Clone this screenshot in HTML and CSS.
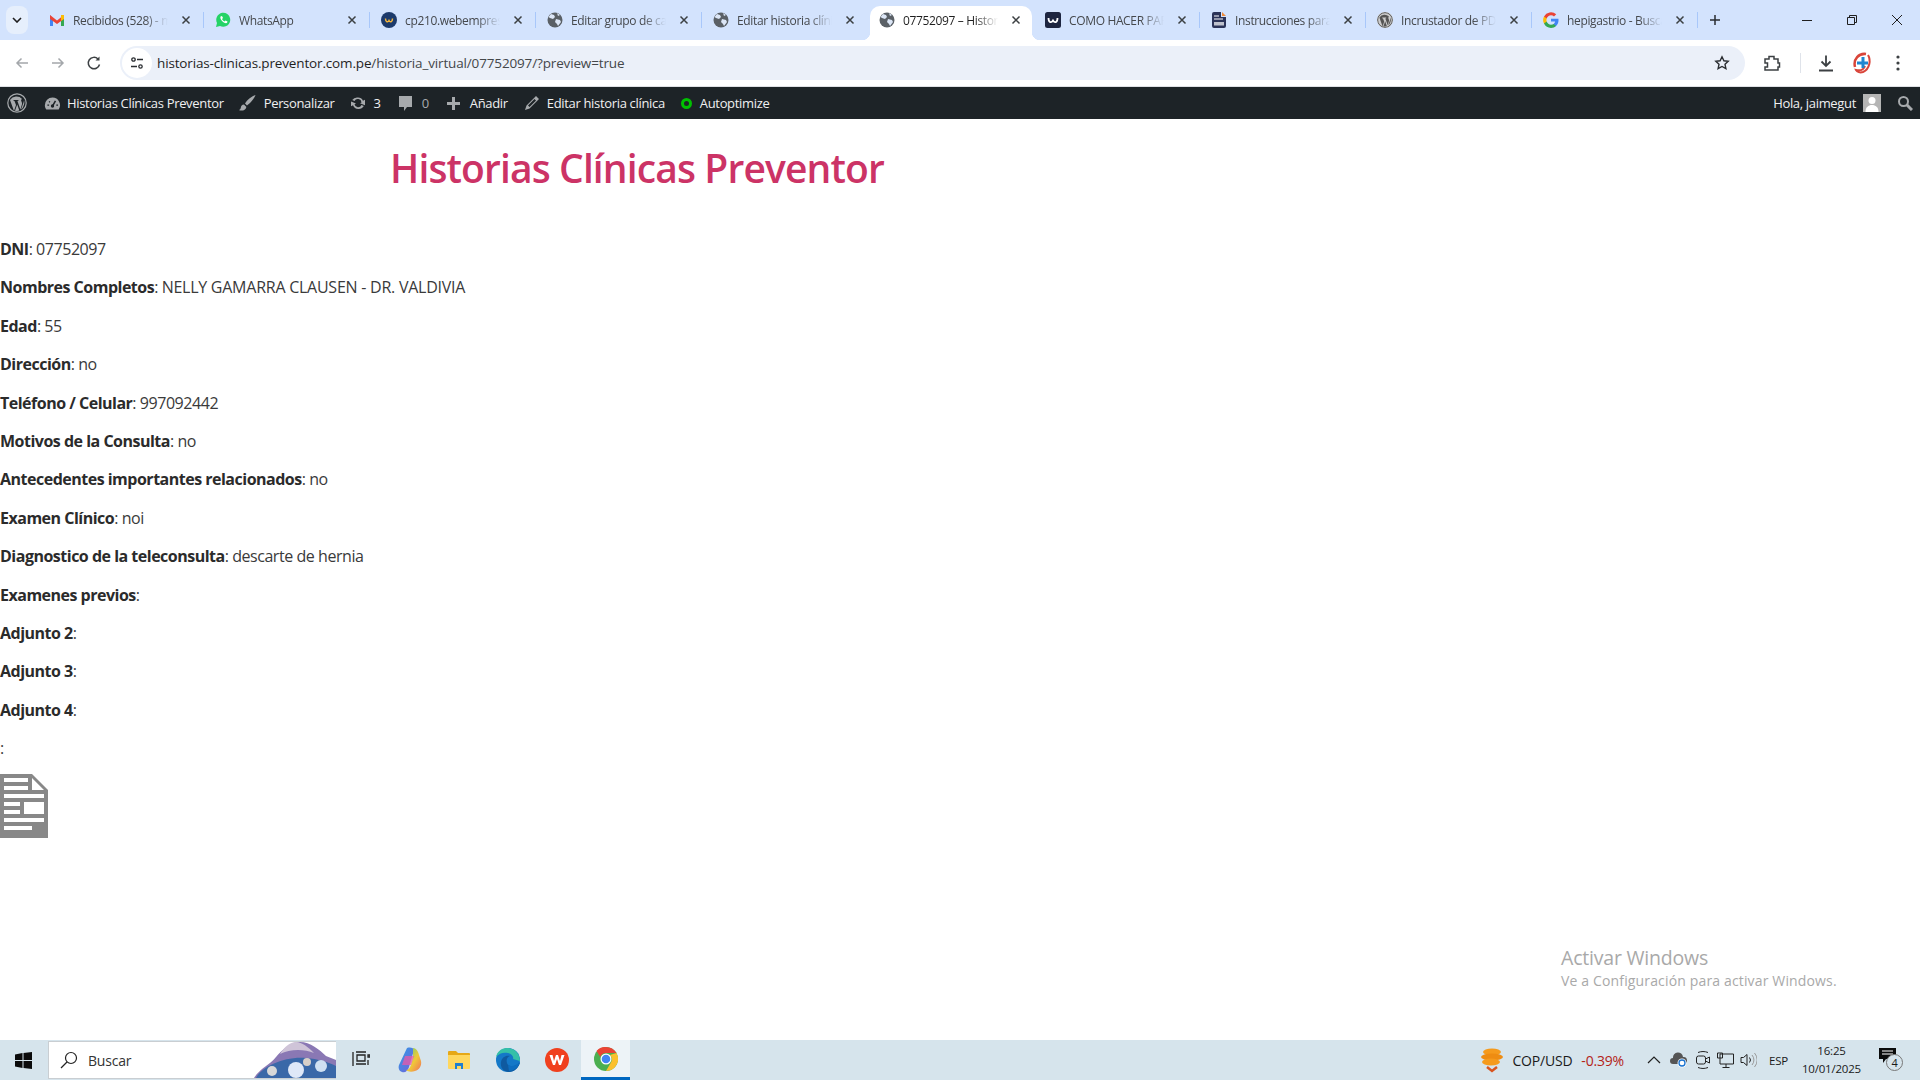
FILE: index.html
```html
<!DOCTYPE html>
<html lang="es">
<head>
<meta charset="utf-8">
<title>07752097 – Historias Clínicas Preventor</title>
<link rel="stylesheet" href="styles.css">
</head>
<body>
<svg class="defs" width="0" height="0" aria-hidden="true">
  <symbol id="globe" viewBox="0 0 16 16"><circle cx="8" cy="8" r="7.500" fill="#5a6066"/><path d="M4 2l3 1 1 2-2 2-3-1-1.500-1zM9 7l4 1 1 2-3 4-1-2-2-2zM10 1l3 2-2 1z" fill="#dce6f6"/></symbol>
  <symbol id="close" viewBox="0 0 10 10"><path d="M1.500 1.500l7 7M8.500 1.500l-7 7" fill="none" stroke="currentColor" stroke-width="1.500"/></symbol>
  <symbol id="wp" viewBox="0 0 20 20"><circle cx="10" cy="10" r="9.200" fill="none" stroke="currentColor" stroke-width="1.200"/><path d="M3 7l4 11 2-6-1.500-4-1-.2V7h5v.8l-1.100.2 3 8.500 1.500-5c.5-2-.8-3-.8-4.200 0-.8.500-1.200 1-1.400A7.800 7.800 0 0 0 3 7zM17 7c.8 2.500.3 5-1.500 8.200L14 16.500l2-5.500c.6-1.700 1-3 1-4zM10.200 11.500l-2.200 6.200c1.400.4 2.800.4 4.300-.1z" fill="currentColor"/></symbol>
  <linearGradient id="cop-a" x1="0" y1="0" x2="1" y2="1"><stop offset="0" stop-color="#2aa0e8"/><stop offset="1" stop-color="#7a5cd8"/></linearGradient>
  <linearGradient id="cop-b" x1="0" y1="0" x2="1" y2="1"><stop offset="0" stop-color="#5fd07a"/><stop offset=".55" stop-color="#f0c838"/><stop offset="1" stop-color="#f0705a"/></linearGradient>
</svg>

<header class="tabstrip">
  <div class="tab-menu"><svg width="10" height="6" viewBox="0 0 10 6"><path d="M1 1l4 4 4-4" fill="none" stroke="#1f1f1f" stroke-width="1.600"/></svg></div>
  <div class="tab">
    <svg class="fav" viewBox="0 0 16 16"><path d="M1 3v11h3V7z" fill="#4285f4"/><path d="M15 3v11h-3V7z" fill="#34a853"/><path d="M1 3l7 5.500L15 3v4L8 12 1 7z" fill="#ea4335"/><path d="M12 3h3v4l-3 2z" fill="#fbbc04"/></svg>
    <span class="tab-label">Recibidos (528) - mail</span>
    <svg class="tab-x"><use href="#close"/></svg>
  </div>
  <div class="tab">
    <svg class="fav" viewBox="0 0 16 16"><path d="M1 15l1-4a7 7 0 1 1 3 3z" fill="#25d366"/><path d="M5.500 4.500l1.500-.5 1 2-1 1c.5 1 1.500 2 2.500 2.500l1-1 2 1-.5 1.500c-3 1-7.500-3.500-6.500-6.500z" fill="#fff"/></svg>
    <span class="tab-label">WhatsApp</span>
    <svg class="tab-x"><use href="#close"/></svg>
  </div>
  <div class="tab">
    <svg class="fav" viewBox="0 0 16 16"><circle cx="8" cy="8" r="8" fill="#1c3a6b"/><path d="M4.500 6.500c0 4 2.500 4 3.500 2 1 2 3.500 2 3.500-2" fill="none" stroke="#f6b73c" stroke-width="1.500"/></svg>
    <span class="tab-label">cp210.webempresa.eu</span>
    <svg class="tab-x"><use href="#close"/></svg>
  </div>
  <div class="tab">
    <svg class="fav"><use href="#globe"/></svg>
    <span class="tab-label">Editar grupo de campos</span>
    <svg class="tab-x"><use href="#close"/></svg>
  </div>
  <div class="tab tab-before-active">
    <svg class="fav"><use href="#globe"/></svg>
    <span class="tab-label">Editar historia clínica</span>
    <svg class="tab-x"><use href="#close"/></svg>
  </div>
  <div class="tab tab-active">
    <svg class="fav"><use href="#globe"/></svg>
    <span class="tab-label">07752097 – Historias</span>
    <svg class="tab-x"><use href="#close"/></svg>
  </div>
  <div class="tab">
    <svg class="fav" viewBox="0 0 16 16"><rect width="16" height="16" rx="2.500" fill="#1d2540"/><path d="M3.500 6c0 5 3 5 4.500 2.500C9.500 11 12.500 11 12.500 6" fill="none" stroke="#fff" stroke-width="1.800"/></svg>
    <span class="tab-label">COMO HACER PARA</span>
    <svg class="tab-x"><use href="#close"/></svg>
  </div>
  <div class="tab">
    <svg class="fav" viewBox="0 0 16 16"><path d="M1 2a2 2 0 0 1 2-2h7v5h5v9a2 2 0 0 1-2 2H3a2 2 0 0 1-2-2z" fill="#2b3358"/><path d="M11 0l4 4h-4z" fill="#f08c3a"/><path d="M3 4h5M3 7h9" stroke="#fff"/><rect x="3" y="10" width="10" height="3.500" fill="#fff" opacity=".7"/></svg>
    <span class="tab-label">Instrucciones para</span>
    <svg class="tab-x"><use href="#close"/></svg>
  </div>
  <div class="tab">
    <svg class="fav wp-fav"><use href="#wp"/></svg>
    <span class="tab-label">Incrustador de PDF</span>
    <svg class="tab-x"><use href="#close"/></svg>
  </div>
  <div class="tab">
    <svg class="fav" viewBox="0 0 16 16"><path d="M15.500 8.200c0-.6 0-1-.1-1.500H8v2.900h4.200a3.600 3.600 0 0 1-1.600 2.300v2h2.500c1.500-1.300 2.400-3.300 2.400-5.700z" fill="#4285f4"/><path d="M8 16c2.100 0 3.900-.7 5.100-1.900l-2.500-2c-.7.500-1.600.7-2.600.7-2 0-3.700-1.300-4.300-3.200H1v2A8 8 0 0 0 8 16z" fill="#34a853"/><path d="M3.700 9.600a4.800 4.800 0 0 1 0-3.200v-2H1a8 8 0 0 0 0 7.200z" fill="#fbbc05"/><path d="M8 3.200c1.200 0 2.200.4 3 1.200l2.200-2.200A8 8 0 0 0 1 4.400l2.700 2C4.300 4.500 6 3.200 8 3.200z" fill="#ea4335"/></svg>
    <span class="tab-label">hepigastrio - Buscar</span>
    <svg class="tab-x"><use href="#close"/></svg>
  </div>
  <div class="tab-new"><svg width="12" height="12" viewBox="0 0 12 12"><path d="M6 1v10M1 6h10" stroke="#2a2d31" stroke-width="1.500"/></svg></div>
  <div class="win-controls">
    <svg width="10" height="10" viewBox="0 0 10 10"><path d="M0 5.500h10" stroke="#1f1f1f"/></svg>
    <svg width="10" height="10" viewBox="0 0 10 10"><path d="M.5 2.500h7v7h-7zM2.500 2.500v-2h7v7h-2" fill="none" stroke="#1f1f1f"/></svg>
    <svg width="10" height="10" viewBox="0 0 10 10"><path d="M0 0l10 10M10 0L0 10" stroke="#1f1f1f"/></svg>
  </div>
</header>

<nav class="toolbar">
  <svg class="tb-icon" width="16" height="16" viewBox="0 0 16 16"><path d="M14 8H3M7.500 3.500L3 8l4.500 4.500" fill="none" stroke="#a4a7ab" stroke-width="1.500"/></svg>
  <svg class="tb-icon" width="16" height="16" viewBox="0 0 16 16"><path d="M2 8h11M8.500 3.500L13 8l-4.500 4.500" fill="none" stroke="#a4a7ab" stroke-width="1.500"/></svg>
  <svg class="tb-icon" width="16" height="16" viewBox="0 0 16 16"><path d="M13.500 9.500A5.700 5.700 0 1 1 12 4" fill="none" stroke="#3c4043" stroke-width="1.500"/><path d="M13.500 1.500v4h-4z" fill="#3c4043"/></svg>
  <div class="omnibox">
    <div class="site-chip"><svg width="14" height="14" viewBox="0 0 14 14"><circle cx="3.500" cy="3.500" r="1.700" fill="none" stroke="#2a2d31" stroke-width="1.300"/><path d="M7 3.500h6M1 10.500h6" stroke="#2a2d31" stroke-width="1.300"/><circle cx="10.500" cy="10.500" r="1.700" fill="none" stroke="#2a2d31" stroke-width="1.300"/></svg></div>
    <span class="url">historias-clinicas.preventor.com.pe<span class="url-path">/historia_virtual/07752097/?preview=true</span></span>
    <svg class="star" width="16" height="16" viewBox="0 0 16 16"><path d="M8 1.800l1.900 4 4.300.5-3.200 3 .9 4.300L8 11.500l-3.900 2.100.9-4.300-3.200-3 4.300-.5z" fill="none" stroke="#2a2d31" stroke-width="1.400"/></svg>
  </div>
  <svg class="tb-ext" width="18" height="18" viewBox="0 0 18 18"><path d="M2 5h4V2.500h5V5h4v4h1.500v4H15v3H2v-3h2.500V9H2z" fill="none" stroke="#3c4043" stroke-width="1.500"/></svg>
  <span class="tb-sep"></span>
  <svg class="tb-dl" width="18" height="18" viewBox="0 0 18 18"><path d="M9 1.500v10M4.500 7.500L9 12l4.500-4.500M2 16.500h14" fill="none" stroke="#3c4043" stroke-width="1.800"/></svg>
  <svg class="tb-avatar" width="20" height="22" viewBox="0 0 20 22"><path d="M3 15C1 7 7 1 14 2" fill="none" stroke="#d9453a" stroke-width="2.500"/><path d="M16 3c3 5 2 14-5 17-3 1-6 0-7-2 5 1 8-1 9-4" fill="none" stroke="#d9453a" stroke-width="2"/><path d="M11 5v11M5 11h11" stroke="#1f86d0" stroke-width="3"/></svg>
  <svg class="tb-more" width="4" height="16" viewBox="0 0 4 16"><circle cx="2" cy="2" r="1.600" fill="#3c4043"/><circle cx="2" cy="8" r="1.600" fill="#3c4043"/><circle cx="2" cy="14" r="1.600" fill="#3c4043"/></svg>
</nav>

<div class="adminbar">
  <div class="ab-item ab-logo"><svg class="ab-ico" width="20" height="20"><use href="#wp"/></svg></div>
  <div class="ab-item ab-site"><svg class="ab-ico" width="17" height="17" viewBox="0 0 20 20"><path d="M10 3a9 9 0 0 0-9 9c0 2 .6 3.700 1.700 5h14.600A9 9 0 0 0 10 3z" fill="currentColor"/><path d="M10 13l3.500-6" stroke="#1d2327" stroke-width="1.800"/><circle cx="10" cy="13" r="2" fill="#1d2327"/><path d="M4 12h2M14.500 12h2M6 7.500l1 1" stroke="#1d2327" stroke-width="1.500"/></svg><span>Historias Clínicas Preventor</span></div>
  <div class="ab-item ab-custom"><svg class="ab-ico" width="18" height="18" viewBox="0 0 18 18"><path d="M17.500 1C14 2 9 6 7 9.500l2 2C12 9.500 16.500 4.500 17.500 1zM6 10.500c-2 .2-3 1.500-3.200 3.200C2.600 15 2 15.700.8 16c2.700 1.200 6.700.8 7.600-3.100z" fill="currentColor"/></svg><span>Personalizar</span></div>
  <div class="ab-item ab-sync"><svg class="ab-ico" width="18" height="18" viewBox="0 0 18 18"><path d="M9 3.500a5.500 5.500 0 0 1 5 3.200l2-1v5.500l-5-2 1.500-.8A3.700 3.700 0 0 0 5.500 7L3.200 6A6 6 0 0 1 9 3.500zM2 7.500l5 2-1.500.8a3.700 3.700 0 0 0 7 .7l2.300 1A6 6 0 0 1 4 11.300l-2 1z" fill="currentColor"/></svg><span>3</span></div>
  <div class="ab-item ab-comment"><svg class="ab-ico" width="15" height="17" viewBox="0 0 15 17"><path d="M1 1h13v11H9l-3 4v-4H1z" fill="currentColor"/></svg><span class="ab-count">0</span></div>
  <div class="ab-item ab-new"><svg class="ab-ico" width="13" height="13" viewBox="0 0 13 13"><path d="M5 0h3v5h5v3H8v5H5V8H0V5h5z" fill="currentColor"/></svg><span>Añadir</span></div>
  <div class="ab-item ab-edit"><svg class="ab-ico" width="16" height="16" viewBox="0 0 16 16"><path d="M12 1l3 3-9.500 9.500L1 15l1.500-4.500zM10.500 4l1.500 1.500-6.500 6.500L4 10.500z" fill="currentColor" fill-rule="evenodd"/></svg><span>Editar historia clínica</span></div>
  <div class="ab-item ab-opt"><span class="ab-dot"></span><span>Autoptimize</span></div>
  <div class="ab-right">
    <span>Hola, jaimegut</span>
    <svg class="ab-user" width="18" height="18" viewBox="0 0 18 18"><rect width="18" height="18" fill="#b5b5b5"/><circle cx="9" cy="6.500" r="3.500" fill="#fff"/><path d="M2.500 18c0-5 3-7 6.500-7s6.500 2 6.500 7z" fill="#fff"/></svg>
    <svg class="ab-search" width="16" height="16" viewBox="0 0 16 16"><circle cx="6.500" cy="6.500" r="4.500" fill="none" stroke="#a7aaad" stroke-width="2"/><path d="M10 10l5 5" stroke="#a7aaad" stroke-width="3"/></svg>
  </div>
</div>

<main class="page">
  <h1 class="site-title">Historias Clínicas Preventor</h1>
  <p><strong>DNI</strong>: 07752097</p>
  <p><strong>Nombres Completos</strong>: <span class="caps">NELLY GAMARRA CLAUSEN - DR. VALDIVIA</span></p>
  <p><strong>Edad</strong>: 55</p>
  <p><strong>Dirección</strong>: no</p>
  <p><strong>Teléfono / Celular</strong>: 997092442</p>
  <p><strong>Motivos de la Consulta</strong>: no</p>
  <p><strong>Antecedentes importantes relacionados</strong>: no</p>
  <p><strong>Examen Clínico</strong>: noi</p>
  <p><strong>Diagnostico de la teleconsulta</strong>: descarte de hernia</p>
  <p><strong>Examenes previos</strong>:</p>
  <p><strong>Adjunto 2</strong>:</p>
  <p><strong>Adjunto 3</strong>:</p>
  <p><strong>Adjunto 4</strong>:</p>
  <p>:</p>
  <svg class="doc" width="48" height="64" viewBox="0 0 48 64"><path fill-rule="evenodd" fill="#888" d="M0 0h32l16 16v48H0zM4 4v4h24V4zM4 12v4h24v-4zM32 4v12h12zM4 20v4h40v-4zM4 28v4h16v-4zM24 28v12h20V28zM4 36v4h16v-4zM4 44v4h40v-4zM4 52v4h28v-4z"/></svg>
  <div class="watermark">
    <div class="wm-title">Activar Windows</div>
    <div class="wm-sub">Ve a Configuración para activar Windows.</div>
  </div>
</main>

<footer class="taskbar">
  <svg class="tk-start" width="17" height="17" viewBox="0 0 17 17"><path d="M0 2.500L7.500 1v7H0zM8.500 1L17 0v8H8.500zM0 9h7.500v7L0 14.500zM8.500 9H17v8l-8.500-1z" fill="#0b0b0b"/></svg>
  <div class="tk-search">
    <svg width="18" height="18" viewBox="0 0 18 18"><circle cx="11" cy="7" r="5.500" fill="none" stroke="#222" stroke-width="1.200"/><path d="M7 11l-6 6" stroke="#222" stroke-width="1.200"/></svg>
    <span>Buscar</span>
    <svg class="tk-art" width="82" height="38" viewBox="0 0 82 38"><path d="M0 38c6-10 16-13 22-21 6-7 14-15 24-15s20 8 26 14l10 4v18z" fill="#8a78b4"/><path d="M26 14c4-7 10-12 16-12s12 5 18 11c-10-4-24-4-34 1z" fill="#cfc4d8"/><path d="M2 38c6-12 30-22 50-20 12 1 22 4 30 8v12z" fill="#3a68a8"/><circle cx="18" cy="31" r="5" fill="#d8d8d8"/><circle cx="42" cy="30" r="8" fill="#dfe8f8"/><circle cx="67" cy="26" r="6" fill="#cfe0f2"/><circle cx="53" cy="22" r="4" fill="#d8cfc8"/></svg>
  </div>
  <div class="tk-apps">
    <div class="tk-app"><svg width="18" height="18" viewBox="0 0 18 18"><path d="M4 1h10M4 13h10M5 4h8v6H5zM1 1v14M16 4h2v2h-2zM16 9v5" fill="none" stroke="#222" stroke-width="1.300"/></svg></div>
    <div class="tk-app"><svg width="24" height="26" viewBox="0 0 24 26"><path d="M9 1c3-1 6-.5 7 2L11 20c-1 4-4 6-7 5-3-1-4-4-3-7z" fill="url(#cop-a)"/><path d="M15 1c3 0 5 3 6 7l2 6c1 5-2 9-6 10-3 1-7 1-9-1 2 0 4-2 5-5l2-7z" fill="url(#cop-b)"/><path d="M7 9h9l-3 9H4z" fill="#e85aa8" opacity=".75"/></svg></div>
    <div class="tk-app"><svg width="22" height="20" viewBox="0 0 22 20"><path d="M0 2a1 1 0 0 1 1-1h7l2 2h11a1 1 0 0 1 1 1v2H0z" fill="#e6a817"/><path d="M0 5h22v13a1 1 0 0 1-1 1H1a1 1 0 0 1-1-1z" fill="#ffd75e"/><path d="M7 19v-6h8v6h-2v-3H9v3z" fill="#1f7fd0"/></svg></div>
    <div class="tk-app"><svg width="24" height="24" viewBox="0 0 24 24"><circle cx="12" cy="12" r="12" fill="#1478c8"/><path d="M24 13c0-7-5-13-13-13C5 0 1 4 0 9c3-4 8-5 12-4 4 1 6 4 5 6z" fill="#35c0a8"/><path d="M24 14c-1 6-6 10-11 10-5 0-9-4-8-10 1-5 5-7 9-6-3 1-4 4-3 7 1 4 8 5 13-1z" fill="#0f5aa0"/><path d="M12 17c3 2 8 1 12-3-1 5-6 9-11 9" fill="#0d6dbf"/></svg></div>
    <div class="tk-app"><svg width="24" height="24" viewBox="0 0 24 24"><circle cx="12" cy="12" r="12" fill="#f0401e"/><path d="M4.500 7h3l1.500 6 2-6h2l2 6 1.500-6h3L16 17h-2l-2-6-2 6H8z" fill="#fff"/></svg></div>
    <div class="tk-app tk-active"><svg width="24" height="24" viewBox="0 0 24 24"><circle cx="12" cy="12" r="12" fill="#4caf50"/><path d="M12 0a12 12 0 0 1 10.400 6H12a6 6 0 0 0-5.700 4L2.500 4A12 12 0 0 1 12 0z" fill="#ea4335"/><path d="M22.400 6A12 12 0 0 1 12 24l5.200-9A6 6 0 0 0 16 8z" fill="#fbc02d"/><circle cx="12" cy="12" r="5.500" fill="#fff"/><circle cx="12" cy="12" r="4.300" fill="#4285f4"/></svg></div>
  </div>
  <div class="tk-tray">
    <svg class="tk-coin" width="22" height="25" viewBox="0 0 22 25"><ellipse cx="11" cy="4" rx="9" ry="3.500" fill="#f59a1c"/><ellipse cx="11" cy="9" rx="11" ry="3.500" fill="#ee8c12"/><ellipse cx="10" cy="14" rx="9" ry="3.500" fill="#f59a1c"/><path d="M6 19l5 4 5-4" fill="none" stroke="#d9541e" stroke-width="2.500"/></svg>
    <span class="tk-pair">COP/USD</span>
    <span class="tk-change">-0.39%</span>
    <svg class="tk-caret" width="14" height="8" viewBox="0 0 14 8"><path d="M1 7l6-6 6 6" fill="none" stroke="#222" stroke-width="1.200"/></svg>
    <svg class="tk-cloud" width="17" height="16" viewBox="0 0 17 16"><path d="M3 12a3 3 0 0 1 0-6 5 5 0 0 1 10-1 3.500 3.500 0 0 1 1 7z" fill="#555"/><circle cx="12" cy="11" r="4.500" fill="#fff"/><circle cx="12" cy="11" r="3" fill="none" stroke="#1a73d0" stroke-width="1.300"/></svg>
    <svg class="tk-cam" width="16" height="18" viewBox="0 0 16 18"><path d="M3 1.500c3-1.300 7-1.300 10 0M3 16.500c3 1.300 7 1.300 10 0" fill="none" stroke="#222"/><rect x="1.500" y="5" width="9" height="8" rx="2" fill="none" stroke="#222"/><path d="M10.500 8l4-2v6l-4-2" fill="none" stroke="#222"/></svg>
    <svg class="tk-net" width="17" height="17" viewBox="0 0 17 17"><path d="M3 2h13.500v10H3zM.5 1h5v5h-5zM9 12v3M5.500 15.500h7" fill="none" stroke="#222"/></svg>
    <svg class="tk-vol" width="17" height="16" viewBox="0 0 17 16"><path d="M1 5.500h2.500L7 2.500v11l-3.500-3H1z" fill="none" stroke="#222"/><path d="M9.500 5.500a4 4 0 0 1 0 5" fill="none" stroke="#222"/><path d="M12 3a7.500 7.500 0 0 1 0 10M14.500 1a10.500 10.500 0 0 1 0 14" fill="none" stroke="#999"/></svg>
    <span class="tk-lang">ESP</span>
    <div class="tk-clock"><span>16:25</span><span>10/01/2025</span></div>
    <div class="tk-notif"><svg width="17" height="15" viewBox="0 0 17 15"><path d="M0 0h17v11H7l-3 4v-4H0z" fill="#0b0b0b"/><path d="M3 3h11M3 6h11" stroke="#fff"/></svg><span class="tk-badge">4</span></div>
  </div>
</footer>
</body>
</html>
```

FILE: styles.css
```css
* { box-sizing: border-box; }
html, body { margin: 0; height: 100%; }
body {
  height: 1080px;
  display: flex;
  flex-direction: column;
  overflow: hidden;
  font-family: "Open Sans", "Noto Sans", sans-serif;
  background: #fff;
  color: #3a3a3a;
}
.defs { position: absolute; }

/* Tab strip */
.tabstrip {
  height: 40px;
  flex: none;
  display: flex;
  align-items: flex-start;
  background: #d3e3fd;
  padding-left: 6px;
}
.tab-menu {
  width: 22px;
  height: 28px;
  margin-top: 6px;
  margin-right: 10px;
  border-radius: 8px;
  background: #e6effc;
  display: flex;
  align-items: center;
  justify-content: center;
}
.tab {
  width: 166px;
  height: 34px;
  margin-top: 6px;
  padding: 0 13px 6px 11px;
  display: flex;
  align-items: center;
  gap: 8px;
  font-size: 12px;
  letter-spacing: -0.35px;
  color: #45484c;
  position: relative;
}
.tab::after {
  content: "";
  position: absolute;
  right: 0;
  top: 6px;
  width: 1px;
  height: 16px;
  background: #a8c7fa;
}
.tab-before-active::after { display: none; }
.tab-active {
  width: 162px;
  margin: 6px 2px 0;
  padding: 0 11px 6px 9px;
  background: #fff;
  border-radius: 10px 10px 0 0;
  color: #1f1f1f;
}
.tab-active::before,
.tab-active::after {
  content: "";
  position: absolute;
  top: auto;
  bottom: 0;
  width: 8px;
  height: 8px;
  background: radial-gradient(circle at 0 0, transparent 8px, #fff 8.500px);
}
.tab-active::before { left: -8px; }
.tab-active::after {
  right: -8px;
  background: radial-gradient(circle at 100% 0, transparent 8px, #fff 8.500px);
}
.fav { width: 16px; height: 16px; flex: none; }
.wp-fav { color: #555; background: #ccc; border-radius: 50%; }
.tab-label {
  flex: 1;
  min-width: 0;
  overflow: hidden;
  white-space: nowrap;
  -webkit-mask-image: linear-gradient(90deg, #000 72%, transparent 95%);
  mask-image: linear-gradient(90deg, #000 72%, transparent 95%);
}
.tab-x { width: 10px; height: 10px; flex: none; color: #3c4043; }
.tab-new {
  width: 34px;
  height: 34px;
  margin-top: 3px;
  display: flex;
  align-items: center;
  justify-content: center;
}
.win-controls {
  margin-left: auto;
  display: flex;
  align-items: center;
  height: 40px;
  gap: 35px;
  padding-right: 18px;
}

/* Toolbar */
.toolbar {
  height: 47px;
  flex: none;
  display: flex;
  align-items: center;
  background: #fff;
  border-bottom: 1px solid #dfe1e5;
  border-radius: 8px 8px 0 0;
  padding: 0 0 0 14px;
  gap: 20px;
}
.omnibox {
  width: 1625px;
  height: 34px;
  margin-left: -2px;
  display: flex;
  align-items: center;
  background: #ebf0f9;
  border-radius: 17px;
  padding: 0 0 0 2px;
}
.site-chip {
  width: 30px;
  height: 30px;
  border-radius: 50%;
  background: #fff;
  display: flex;
  align-items: center;
  justify-content: center;
  flex: none;
}
.url {
  margin-left: 5px;
  font-size: 13.500px;
  letter-spacing: -0.15px;
  color: #1f1f1f;
}
.url-path { color: #44474a; }
.star { margin-left: auto; margin-right: 15px; }
.tb-ext { margin-left: -2px; }
.tb-sep { width: 1px; height: 20px; background: #dfe3ea; margin-left: -1px; }
.tb-dl { margin-left: -4px; }
.tb-avatar { margin-left: -3px; }
.tb-more { margin-left: 4px; }

/* Admin bar */
.adminbar {
  height: 32px;
  flex: none;
  background: #1d2327;
  color: #f0f0f1;
  display: flex;
  align-items: center;
  font-size: 13px;
  letter-spacing: -0.33px;
  padding-left: 7px;
}
.ab-item {
  display: flex;
  align-items: center;
  gap: 6px;
}
.ab-logo { margin-right: 17px; }
.ab-site { margin-right: 14px; }
.ab-custom { margin-right: 14px; gap: 8px; }
.ab-sync { margin-right: 17px; gap: 7px; }
.ab-comment { margin-right: 18px; }
.ab-new { margin-right: 16px; gap: 10px; }
.ab-edit { margin-right: 16px; gap: 7px; }
.ab-opt { gap: 8px; }
.ab-ico { color: #a7aaad; flex: none; }
.ab-count { color: #a7aaad; margin-left: 3px; }
.ab-dot {
  width: 11px;
  height: 11px;
  border-radius: 50%;
  border: 3px solid #00c000;
}
.ab-right {
  margin-left: auto;
  display: flex;
  align-items: center;
  padding-right: 7px;
}
.ab-user { margin-left: 7px; }
.ab-search { margin-left: 16px; }

/* Page */
.page {
  flex: 1;
  min-height: 0;
  position: relative;
  font-size: 16px;
  line-height: 24px;
  letter-spacing: -0.45px;
}
.site-title {
  margin: 0 0 44px;
  padding: 24px 0 0 390px;
  font-size: 39px;
  line-height: 50px;
  font-weight: 600;
  letter-spacing: -0.88px;
  color: #cc3366;
}
.page p { margin: 0 0 14.400px; }
.page strong { font-weight: 700; color: #2b2b2b; letter-spacing: -0.5px; }
.caps { letter-spacing: -0.25px; }
.doc { display: block; }
.watermark {
  position: absolute;
  left: 1561px;
  bottom: 49px;
  color: #a9a9a9;
}
.wm-title { font-size: 19.500px; line-height: 26px; letter-spacing: -0.2px; }
.wm-sub { font-size: 14px; line-height: 20px; letter-spacing: 0.15px; }

/* Taskbar */
.taskbar {
  height: 40px;
  flex: none;
  display: flex;
  align-items: center;
  background: #d6e4ec;
  color: #1a1a1a;
}
.tk-start { margin-left: 15px; flex: none; }
.tk-search {
  width: 288px;
  height: 38px;
  margin-left: 16px;
  flex: none;
  background: #fff;
  border: 1px solid #c9ced2;
  border-right: 0;
  display: flex;
  align-items: center;
  padding-left: 11px;
  font-size: 14px;
  letter-spacing: -0.2px;
  color: #333;
  position: relative;
  gap: 10px;
  overflow: hidden;
}
.tk-art { position: absolute; right: 0; bottom: 0; }
.tk-apps { display: flex; align-items: center; }
.tk-app {
  width: 49px;
  height: 40px;
  display: flex;
  align-items: center;
  justify-content: center;
}
.tk-active { background: #edf3f7; border-bottom: 3px solid #0067c0; }
.tk-tray {
  margin-left: auto;
  display: flex;
  align-items: center;
  height: 40px;
  font-size: 14px;
  letter-spacing: -0.2px;
  padding-right: 21px;
}
.tk-pair { margin-left: 9px; }
.tk-change { margin-left: 9px; color: #b42318; }
.tk-caret { margin-left: 23px; }
.tk-cloud { margin-left: 9px; }
.tk-cam { margin-left: 8px; }
.tk-net { margin-left: 6px; }
.tk-vol { margin-left: 6px; }
.tk-lang { margin-left: 12px; font-size: 11.500px; }
.tk-clock {
  margin-left: 14px;
  display: flex;
  flex-direction: column;
  align-items: center;
  font-size: 11.500px;
  line-height: 18px;
}
.tk-notif { margin-left: 18px; position: relative; width: 20px; height: 24px; }
.tk-badge {
  position: absolute;
  left: 7px;
  top: 6px;
  width: 17px;
  height: 17px;
  border-radius: 50%;
  background: #d6e4ec;
  border: 1px solid #777;
  font-size: 11px;
  line-height: 15px;
  text-align: center;
}
```
